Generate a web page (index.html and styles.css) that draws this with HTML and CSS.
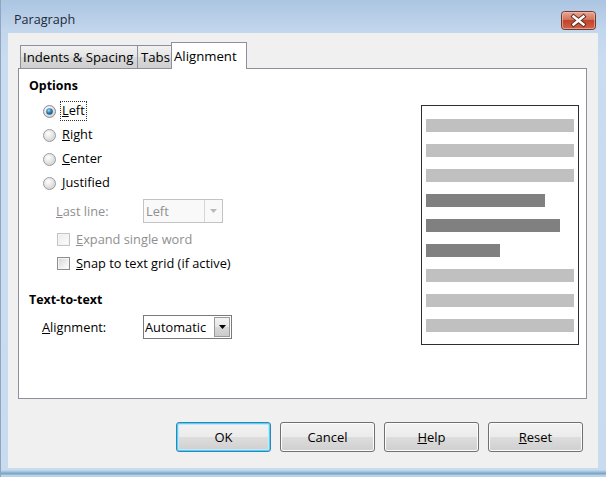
FILE: index.html
```html
<!DOCTYPE html>
<html>
<head>
<meta charset="utf-8">
<link rel="stylesheet" href="styles.css">
</head>
<body>
<div class="window">
  <div class="titlebar">
    <span class="title">Paragraph</span>
    <div class="close">
      <svg width="35" height="19" viewBox="0 0 35 19">
        <defs>
          <linearGradient id="cg" x1="0" y1="0" x2="0" y2="1">
            <stop offset="0" stop-color="#e9a896"/>
            <stop offset="0.45" stop-color="#d5735c"/>
            <stop offset="0.5" stop-color="#c2432a"/>
            <stop offset="1" stop-color="#d0654a"/>
          </linearGradient>
        </defs>
        <rect x="0.5" y="0.5" width="34" height="18" rx="3" fill="url(#cg)" stroke="#6b3a30"/>
        <rect x="1.5" y="1.5" width="32" height="16" rx="2" fill="none" stroke="#f1c2b4" stroke-opacity="0.6"/>
        <path d="M12.5 5.5 L22.5 13.5 M22.5 5.5 L12.5 13.5" stroke="#5a2a22" stroke-width="4.2" stroke-linecap="square"/>
        <path d="M12.5 5.5 L22.5 13.5 M22.5 5.5 L12.5 13.5" stroke="#ffffff" stroke-width="2.4" stroke-linecap="square"/>
      </svg>
    </div>
  </div>
  <div class="client">
    <div class="tabs">
      <div class="tab tab-indents">Indents &amp; Spacing</div>
      <div class="tab tab-tabs">Tabs</div>
      <div class="tab tab-align active">Alignment</div>
    </div>
    <div class="panel">
      <div class="options">
        <div class="heading">Options</div>
        <div class="row radio-row">
          <svg class="radio" width="13" height="13" viewBox="0 0 13 13">
            <defs>
              <radialGradient id="rg1" cx="0.4" cy="0.35" r="0.7">
                <stop offset="0" stop-color="#ffffff"/>
                <stop offset="1" stop-color="#cfcfcf"/>
              </radialGradient>
              <radialGradient id="dot" cx="0.4" cy="0.35" r="0.7">
                <stop offset="0" stop-color="#a9dcf7"/>
                <stop offset="0.5" stop-color="#2e7fb8"/>
                <stop offset="1" stop-color="#174f7c"/>
              </radialGradient>
            </defs>
            <circle cx="6.5" cy="6.5" r="6" fill="url(#rg1)" stroke="#8a8c8e"/>
            <circle cx="6.5" cy="6.5" r="3.3" fill="url(#dot)"/>
          </svg>
          <span class="label focus"><u>L</u>eft</span>
        </div>
        <div class="row radio-row">
          <svg class="radio" width="13" height="13" viewBox="0 0 13 13">
            <circle cx="6.5" cy="6.5" r="6" fill="url(#rg1)" stroke="#9a9c9e"/>
          </svg>
          <span class="label"><u>R</u>ight</span>
        </div>
        <div class="row radio-row">
          <svg class="radio" width="13" height="13" viewBox="0 0 13 13">
            <circle cx="6.5" cy="6.5" r="6" fill="url(#rg1)" stroke="#9a9c9e"/>
          </svg>
          <span class="label"><u>C</u>enter</span>
        </div>
        <div class="row radio-row">
          <svg class="radio" width="13" height="13" viewBox="0 0 13 13">
            <circle cx="6.5" cy="6.5" r="6" fill="url(#rg1)" stroke="#9a9c9e"/>
          </svg>
          <span class="label"><u>J</u>ustified</span>
        </div>
        <div class="row lastline-row">
          <span class="field-label disabled"><u>L</u>ast line:</span>
          <div class="combo combo-disabled">
            <span class="combo-text">Left</span>
            <span class="combo-drop">
              <svg width="7" height="4" viewBox="0 0 7 4"><path d="M0 0 H7 L3.5 4 Z" fill="#b8b8b8"/></svg>
            </span>
          </div>
        </div>
        <div class="row check-row disabled">
          <span class="check check-disabled"></span>
          <span class="label"><u>E</u>xpand single word</span>
        </div>
        <div class="row check-row">
          <span class="check"></span>
          <span class="label"><u>S</u>nap to text grid (if active)</span>
        </div>
        <div class="heading heading-2">Text-to-text</div>
        <div class="row align-row">
          <span class="field-label wide"><u>A</u>lignment:</span>
          <div class="combo combo-auto">
            <span class="combo-text">Automatic</span>
            <span class="combo-drop">
              <svg width="7" height="4" viewBox="0 0 7 4"><path d="M0 0 H7 L3.5 4 Z" fill="#000"/></svg>
            </span>
          </div>
        </div>
      </div>
      <div class="preview">
        <div class="bar light"></div>
        <div class="bar light"></div>
        <div class="bar light"></div>
        <div class="bar dark" style="width:119px"></div>
        <div class="bar dark" style="width:134px"></div>
        <div class="bar dark" style="width:74px"></div>
        <div class="bar light"></div>
        <div class="bar light"></div>
        <div class="bar light"></div>
      </div>
    </div>
    <div class="buttons">
      <div class="btn default">OK</div>
      <div class="btn">Cancel</div>
      <div class="btn"><u>H</u>elp</div>
      <div class="btn"><u>R</u>eset</div>
    </div>
  </div>
</div>
</body>
</html>
```
FILE: styles.css
```css
html, body {
  margin: 0;
  padding: 0;
  background: #c9dcf0;
}
.window {
  width: 606px;
  height: 477px;
  box-sizing: border-box;
  padding: 0 8px 9px 7px;
  display: flex;
  flex-direction: column;
  background: linear-gradient(#abc5e2 0px, #c2d6ec 30px, #cadcf0 60px, #c8dbef 470px, #6f9fc2 474px, #b9d3ea 475px);
  border-left: 1px solid #8ea6c2;
  font-family: "Open Sans", "Noto Sans", sans-serif;
  font-size: 12.8px;
  color: #000;
}
.titlebar {
  height: 33px;
  box-sizing: border-box;
  padding-top: 8px;
  display: flex;
  align-items: center;
  margin: 0 -8px 0 -7px;
  padding-left: 13px;
  padding-right: 10px;
}
.title {
  font-size: 12.6px;
  color: #1e2a38;
  margin-top: -2px;
}
.close {
  margin-left: auto;
  width: 35px;
  height: 19px;
  display: flex;
}
.client {
  flex: 1;
  background: #f0f0f0;
  padding: 9px 15px 16px 10px;
  display: flex;
  flex-direction: column;
}
.tabs {
  height: 26px;
  display: flex;
  align-items: flex-end;
  padding-left: 2px;
  position: relative;
  z-index: 1;
}
.tab {
  height: 23px;
  box-sizing: border-box;
  border: 1px solid #8d9099;
  border-bottom: none;
  background: linear-gradient(#f2f2f2, #e3e3e3 50%, #d9d9d9 51%, #cfcfcf);
  display: flex;
  align-items: center;
  padding-left: 2px;
  white-space: nowrap;
  font-size: 13.2px;
}
.tab-indents { width: 118px; }
.tab-tabs { width: 35px; margin-left: -1px; padding-left: 3px; }
.tab.active {
  height: 27px;
  margin-bottom: -1px;
  background: #ffffff;
  width: 76px;
  margin-left: -1px;
  padding-left: 2px;
  padding-bottom: 1px;
}
.panel {
  height: 331px;
  margin-right: -4px;
  box-sizing: border-box;
  border: 1px solid #8d9099;
  background: #ffffff;
  display: flex;
  justify-content: space-between;
  align-items: flex-start;
}
.options {
  padding-top: 9px;
  padding-left: 10px;
  display: flex;
  flex-direction: column;
}
.heading {
  font-weight: bold;
  height: 16px;
  line-height: 16px;
  font-size: 12.4px;
}
.heading-2 {
  margin-top: 17px;
}
.row {
  display: flex;
  align-items: center;
  height: 24px;
  white-space: nowrap;
}
.radio-row {
  margin-left: 14px;
}
.heading + .radio-row { margin-top: 5px; }
.radio {
  display: block;
  flex: none;
}
.radio-row .label {
  margin-left: 4px;
  border: 1px dotted transparent;
  padding: 0 1px 1px 1px;
  line-height: 17px;
}
.radio-row .label.focus {
  border-color: #333;
}
.lastline-row {
  margin-top: 4px;
  margin-left: 27px;
}
.field-label {
  width: 87px;
  flex: none;
}
.field-label.wide {
  width: 101px;
}
.disabled {
  color: #8f8f8f;
}
.combo {
  height: 24px;
  box-sizing: border-box;
  display: flex;
  align-items: stretch;
  border: 1px solid #7a7a7a;
  background: #fff;
}
.combo-text {
  display: flex;
  align-items: center;
  padding-left: 2px;
  flex: 1;
  overflow: hidden;
}
.combo-drop {
  display: flex;
  align-items: center;
  justify-content: center;
  width: 17px;
  flex: none;
}
.combo-disabled {
  width: 80px;
  border-color: #c3c3c3;
  background: #f9f9f9;
  color: #8f8f8f;
}
.combo-disabled .combo-drop {
  border-left: 1px solid #d6d6d6;
}
.combo-auto {
  width: 89px;
}
.combo-auto .combo-text {
  padding-left: 1px;
}
.combo-auto .combo-drop {
  margin: 1px 1px 1px 0;
  border: 1px solid #9a9a9a;
  background: linear-gradient(#f3f3f3, #e6e6e6 50%, #d8d8d8 51%, #cbcbcb);
  width: 14px;
}
.check-row {
  margin-left: 28px;
}
.lastline-row + .check-row {
  margin-top: 4px;
}
.check {
  width: 13px;
  height: 13px;
  box-sizing: border-box;
  border: 1px solid #8e8f8f;
  background: linear-gradient(135deg, #d4d4d4, #f4f4f4 70%, #ffffff);
  box-shadow: inset 0 0 0 1px #f4f4f4;
  flex: none;
}
.check-disabled {
  border-color: #c4c4c4;
  background: linear-gradient(135deg, #ececec, #f7f7f7 70%, #ffffff);
}
.check-row .label {
  margin-left: 6px;
}
.align-row {
  margin-top: 7px;
  margin-left: 13px;
}
.preview {
  margin-top: 36px;
  margin-right: 7px;
  width: 158px;
  height: 240px;
  box-sizing: border-box;
  border: 1px solid #2e2e2e;
  padding: 13px 0 0 4px;
  display: flex;
  flex-direction: column;
  gap: 12px;
}
.bar {
  height: 13px;
  width: 148px;
}
.bar.light { background: #c0c0c0; }
.bar.dark { background: #808080; }
.buttons {
  margin-top: 23px;
  display: flex;
  justify-content: flex-end;
  gap: 9px;
}
.btn {
  width: 95px;
  height: 30px;
  box-sizing: border-box;
  border: 1px solid #707070;
  border-radius: 3px;
  background: linear-gradient(#f2f2f2, #ebebeb 50%, #dddddd 51%, #cfcfcf);
  box-shadow: inset 0 0 0 1px #fcfcfc;
  display: flex;
  align-items: center;
  justify-content: center;
  font-size: 13px;
}
.btn.default {
  border-color: #3c7fb1;
  box-shadow: inset 0 0 0 1px #48d7fb, inset 0 0 0 2px #c0e8f8;
}
```
